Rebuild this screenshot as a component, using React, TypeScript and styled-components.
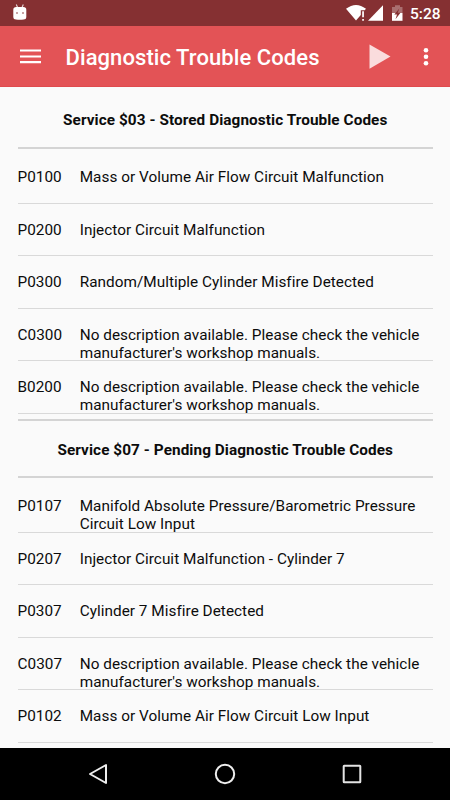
import React from "react";
import styled, { createGlobalStyle } from "styled-components";

const GlobalStyle = createGlobalStyle`
  *, *::before, *::after { box-sizing: border-box; }
  body { margin: 0; background: #fafafa; font-family: Roboto, sans-serif; }
`;

const Screen = styled.div`
  width: 450px;
  height: 800px;
  display: flex;
  flex-direction: column;
  overflow: hidden;
  background: #fafafa;
  color: #0c0c0c;
`;

const StatusBar = styled.header`
  flex: none;
  height: 26px;
  display: flex;
  align-items: center;
  padding: 0 9px 0 12px;
  background: #853032;
  color: #fff;
`;

const StatusIcons = styled.div`
  display: flex;
  align-items: center;
  margin-left: auto;
`;

const Clock = styled.span`
  width: 31px;
  margin-left: 6px;
  padding-top: 2px;
  font-size: 15.5px;
  font-weight: 500;
  line-height: 20px;
  white-space: nowrap;
`;

const AppBar = styled.div`
  flex: none;
  height: 61px;
  display: flex;
  align-items: center;
  padding: 0 21px 0 20px;
  background: #e35356;
  border-bottom: 1px solid #df4b4e;
  color: #fff;
`;

const Title = styled.h1`
  flex: 1;
  margin: 0 0 0 24.5px;
  padding-top: 4px;
  font-size: 22px;
  font-weight: 500;
  line-height: 28px;
  letter-spacing: 0.08px;
  white-space: nowrap;
`;

const IconButton = styled.button<{ $width: number; $gap?: number }>`
  flex: none;
  width: ${(p) => p.$width}px;
  height: 26px;
  margin-left: ${(p) => p.$gap ?? 0}px;
  padding: 0;
  border: 0;
  background: none;
  color: inherit;
  display: flex;
  align-items: center;
  justify-content: center;
`;

const Content = styled.main`
  flex: 1;
  min-height: 0;
  overflow: hidden;
  padding: 0 17px 0 17.5px;
`;

const SectionTitle = styled.h2<{ $ruled?: boolean; $height: number }>`
  height: ${(p) => p.$height}px;
  margin: ${(p) => (p.$ruled ? "5.5px 0 0" : "0")};
  padding-top: ${(p) => (p.$ruled ? 20 : 24)}px;
  border-top: ${(p) => (p.$ruled ? "2px solid #d4d4d4" : "0")};
  border-bottom: 2px solid #d4d4d4;
  font-size: 15.32px;
  font-weight: 700;
  line-height: 18px;
  letter-spacing: 0.075px;
  text-align: center;
  white-space: nowrap;
`;

const CodeList = styled.ul`
  margin: 0;
  padding: 0;
  list-style: none;
`;

const CodeRow = styled.li<{ $first: boolean }>`
  height: ${(p) => (p.$first ? 55 : 52.5)}px;
  padding-top: ${(p) => (p.$first ? 19 : 17)}px;
  display: grid;
  grid-template-columns: 62.2px 1fr;
  border-bottom: 1px solid #d9d9d9;
  font-size: 15.32px;
  line-height: 18px;
  letter-spacing: 0.035px;
`;

const Description = styled.span`
  white-space: pre;
`;

const NavBar = styled.nav`
  flex: none;
  height: 52px;
  display: grid;
  grid-template-columns: 127px 127px 127px;
  justify-content: center;
  align-items: center;
  background: #000;
`;

const NavButton = styled.button`
  height: 52px;
  padding: 0;
  border: 0;
  background: none;
  display: flex;
  align-items: center;
  justify-content: center;
`;

interface Code {
  code: string;
  text: string;
}

const unknown =
  "No description available. Please check the vehicle\nmanufacturer's workshop manuals.";

const stored: Code[] = [
  { code: "P0100", text: "Mass or Volume Air Flow Circuit Malfunction" },
  { code: "P0200", text: "Injector Circuit Malfunction" },
  { code: "P0300", text: "Random/Multiple Cylinder Misfire Detected" },
  { code: "C0300", text: unknown },
  { code: "B0200", text: unknown },
];

const pending: Code[] = [
  { code: "P0107", text: "Manifold Absolute Pressure/Barometric Pressure\nCircuit Low Input" },
  { code: "P0207", text: "Injector Circuit Malfunction - Cylinder 7" },
  { code: "P0307", text: "Cylinder 7 Misfire Detected" },
  { code: "C0307", text: unknown },
  { code: "P0102", text: "Mass or Volume Air Flow Circuit Low Input" },
];

function Codes({ items }: { items: Code[] }) {
  return (
    <CodeList>
      {items.map((item, i) => (
        <CodeRow key={item.code} $first={i === 0}>
          <span>{item.code}</span>
          <Description>{item.text}</Description>
        </CodeRow>
      ))}
    </CodeList>
  );
}

const DroidIcon = () => (
  <svg width="16" height="18" viewBox="0 0 16 18">
    <path d="M4.3 .5 5.600 3.500M11.300 .5 10 3.500" stroke="#fff" strokeOpacity=".8" strokeWidth="1.1" />
    <path d="M1.300 5.700Q1.300 3 4.300 3h7q3 0 3 2.700V13.200q0 2.100-2.600 2.400-3.900.5-7.800 0Q1.300 15.300 1.300 13.200Z" fill="#fff" />
    <circle cx="5" cy="9" r=".8" fill="#853032" />
    <circle cx="11" cy="9" r=".8" fill="#853032" />
  </svg>
);

const StatusGlyphs = () => (
  <svg width="58" height="26" viewBox="0 0 58 26">
    <path d="M0 8.800Q10 1.200 20 8.800L18.700 10.300H14.800V15L10 20.600Z" fill="#fff" />
    <path d="M16.200 11.200h1.700v6h-1.700zM16.200 18.900h1.700v1.800h-1.700z" fill="#fff" />
    <path d="M37 5.300V20.800H22Z" fill="#fff" />
    <path d="M46 7h3V5.200h5V7h2.500v6H46z" fill="#fff" fillOpacity=".3" />
    <path d="M46 13h10.500v7.800H46z" fill="#fff" />
    <path d="M53.300 8.500 48.300 14.500H51l-1.500 4.800 5-6.500H51.800Z" fill="#853032" />
  </svg>
);

export default function App() {
  return (
    <>
      <GlobalStyle />
      <Screen>
        <StatusBar>
          <DroidIcon />
          <StatusIcons>
            <StatusGlyphs />
            <Clock>5:28</Clock>
          </StatusIcons>
        </StatusBar>
        <AppBar>
          <IconButton $width={21} aria-label="Menu">
            <svg width="21" height="16" viewBox="0 0 21 16">
              <path d="M0 2.500h21M0 8.500h21M0 14.200h21" stroke="#fff" strokeWidth="2.200" />
            </svg>
          </IconButton>
          <Title>Diagnostic Trouble Codes</Title>
          <IconButton $width={22} aria-label="Run">
            <svg width="22" height="26" viewBox="0 0 22 26">
              <path d="M.5 1.500 21.500 13.500 .5 25.700Z" fill="#fff" fillOpacity=".8" />
            </svg>
          </IconButton>
          <IconButton $width={6} $gap={32} aria-label="More">
            <svg width="6" height="20" viewBox="0 0 6 20">
              <circle cx="3" cy="4.300" r="2.300" fill="#fff" />
              <circle cx="3" cy="10.800" r="2.300" fill="#fff" />
              <circle cx="3" cy="17.300" r="2.300" fill="#fff" />
            </svg>
          </IconButton>
        </AppBar>
        <Content>
          <SectionTitle $height={61.5}>Service $03 - Stored Diagnostic Trouble Codes</SectionTitle>
          <Codes items={stored} />
          <SectionTitle $ruled $height={58.5}>
            Service $07 - Pending Diagnostic Trouble Codes
          </SectionTitle>
          <Codes items={pending} />
        </Content>
        <NavBar>
          <NavButton aria-label="Back">
            <svg width="22" height="24" viewBox="0 0 22 24">
              <path d="M19 3V21L3 12Z" fill="none" stroke="#eee" strokeWidth="2" strokeLinejoin="round" />
            </svg>
          </NavButton>
          <NavButton aria-label="Home">
            <svg width="22" height="22" viewBox="0 0 22 22">
              <circle cx="11" cy="11" r="9.200" fill="none" stroke="#eee" strokeWidth="2" />
            </svg>
          </NavButton>
          <NavButton aria-label="Recents">
            <svg width="20" height="20" viewBox="0 0 20 20">
              <rect x="1.700" y="1.700" width="16.600" height="16.600" rx=".5" fill="none" stroke="#e4e4e4" strokeWidth="2" />
            </svg>
          </NavButton>
        </NavBar>
      </Screen>
    </>
  );
}
